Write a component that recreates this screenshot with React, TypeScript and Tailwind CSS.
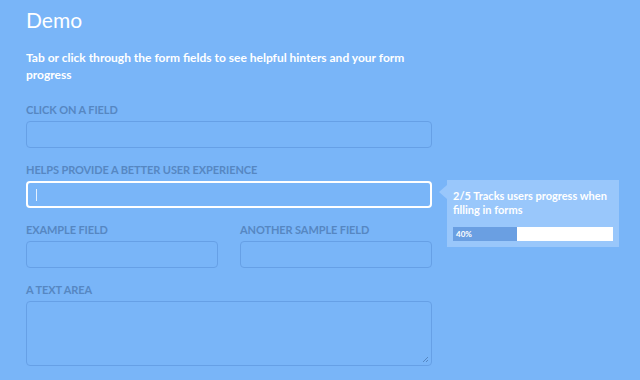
import type React from "react"

const labelCls = "block text-[11px] font-bold uppercase text-[#5687c2] mb-[5px] leading-[13px] tracking-[-0.1px]"
const inputCls = "w-full h-[27px] rounded-[4px] border border-[#66a0e6] bg-transparent outline-none"

const Field: React.FC<{ label: string; focused?: boolean; children?: React.ReactNode }> = ({ label, focused, children }) => (
  <div className="relative">
    <label className={labelCls}>{label}</label>
    {focused ? (
      <div className="h-[27px] rounded-[4px] border-2 border-white flex items-center px-[8px]">
        <span className="w-px h-[12px] bg-white/80" />
      </div>
    ) : (
      <div className={inputCls} />
    )}
    {children}
  </div>
)

export default function App() {
  return (
    <div className="w-[640px] h-[380px] overflow-hidden bg-[#79b5f8] font-['Lato','Liberation_Sans',sans-serif]">
      <div className="w-[406px] ml-[26px] pt-[6px]">
        <h1 className="text-[21px] font-normal text-white leading-[28px]">Demo</h1>
        <p className="mt-[15px] text-[12px] font-bold text-white leading-[17px] w-[400px]">
          Tab or click through the form fields to see helpful hinters and your form progress
        </p>

        <div className="mt-[20px] flex flex-col gap-[15px]">
          <Field label="Click on a field" />
          <Field label="Helps provide a better user experience" focused>
            <div className="absolute left-[421px] top-[17px] w-[172px] bg-[#99c7fb] px-[6px] pt-[9px] pb-[6px]">
              <div className="absolute -left-[8px] top-[5px] w-0 h-0 border-y-[7px] border-y-transparent border-r-[8px] border-r-[#99c7fb]" />
              <p className="text-[11px] font-bold text-white leading-[14px]">
                2/5 Tracks users progress when filling in forms
              </p>
              <div className="mt-[10px] flex h-[14px] bg-white">
                <div className="w-[40%] bg-[#6a9fe2] text-white text-[8px] font-bold leading-[14px] pl-[3px]">40%</div>
              </div>
            </div>
          </Field>
          <div className="grid grid-cols-2 gap-[22px]">
            <Field label="Example field" />
            <Field label="Another sample field" />
          </div>
          <div>
            <label className={labelCls}>A text area</label>
            <div className="relative h-[65px] rounded-[4px] border border-[#66a0e6]">
              <svg className="absolute right-[2px] bottom-[2px]" width="8" height="8" viewBox="0 0 8 8">
                <path d="M7 2 L2 7 M7 5 L5 7" stroke="#5687c2" strokeWidth="1" />
              </svg>
            </div>
          </div>
        </div>
      </div>
    </div>
  )
}
